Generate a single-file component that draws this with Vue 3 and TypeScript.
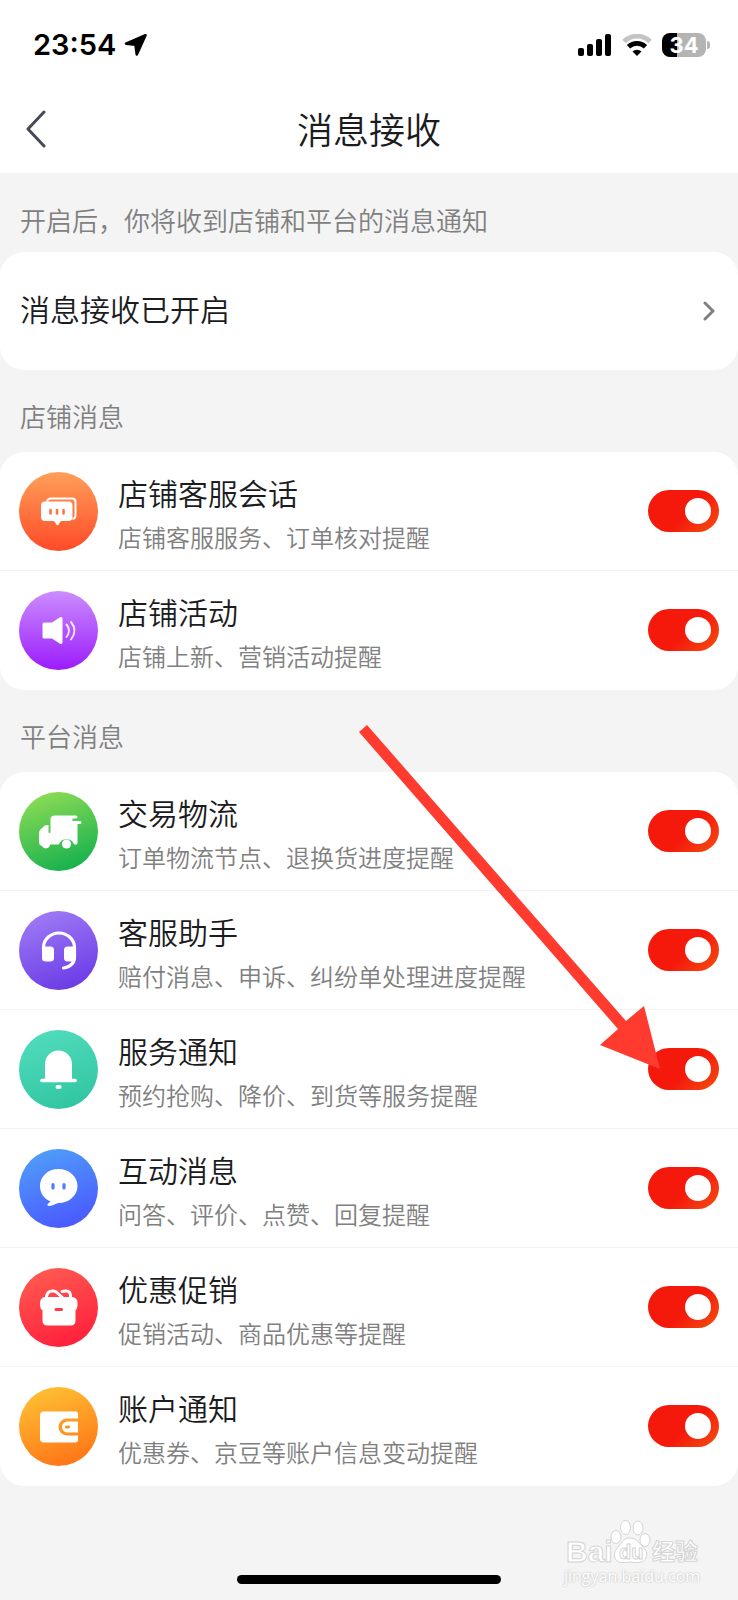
<script setup lang="ts">
import { reactive } from 'vue'

interface Item {
  id: string
  title: string
  desc: string
  from: string
  to: string
  on: boolean
}

interface Group {
  name: string
  items: Item[]
}

const groups = reactive<Group[]>([
  {
    name: '店铺消息',
    items: [
      { id: 'chat', title: '店铺客服会话', desc: '店铺客服服务、订单核对提醒', from: '#ff9f58', to: '#ff4a28', on: true },
      { id: 'sound', title: '店铺活动', desc: '店铺上新、营销活动提醒', from: '#cb8dff', to: '#9b1cfb', on: true },
    ],
  },
  {
    name: '平台消息',
    items: [
      { id: 'truck', title: '交易物流', desc: '订单物流节点、退换货进度提醒', from: '#8cdb55', to: '#14b14e', on: true },
      { id: 'headset', title: '客服助手', desc: '赔付消息、申诉、纠纷单处理进度提醒', from: '#9e7af5', to: '#6b3be6', on: true },
      { id: 'bell', title: '服务通知', desc: '预约抢购、降价、到货等服务提醒', from: '#50dcbc', to: '#32c5a2', on: true },
      { id: 'talk', title: '互动消息', desc: '问答、评价、点赞、回复提醒', from: '#4f9df9', to: '#4a58ff', on: true },
      { id: 'gift', title: '优惠促销', desc: '促销活动、商品优惠等提醒', from: '#ff5a50', to: '#ff1f3c', on: true },
      { id: 'wallet', title: '账户通知', desc: '优惠券、京豆等账户信息变动提醒', from: '#ffc033', to: '#ff7417', on: true },
    ],
  },
])

const isUpright = (id: string): boolean => id === 'chat' || id === 'sound'
</script>

<template>
  <div class="page">
    <header class="top">
      <div class="status">
        <span class="time">23:54</span>
        <svg class="locate" viewBox="0 0 24 24" aria-hidden="true">
          <path d="M21.500 2.200L2 10.600l9.500 1.200L12.800 21.500z" stroke="#000" stroke-width="2.600" stroke-linejoin="round" />
        </svg>
        <svg class="signal" viewBox="0 0 34 22" aria-hidden="true">
          <rect x="0" y="14" width="6" height="8" rx="2" />
          <rect x="9" y="10" width="6" height="12" rx="2" />
          <rect x="18" y="5" width="6" height="17" rx="2" />
          <rect x="27" y="0" width="6" height="22" rx="2" />
        </svg>
        <svg class="wifi" viewBox="0 0 30 22" aria-hidden="true">
          <path d="M2 7.500a18.500 18.500 0 0 1 26 0" fill="none" stroke="#c4c4c4" stroke-width="4.800" />
          <path d="M6.500 12.800a12.500 12.500 0 0 1 17 0" fill="none" stroke="#000" stroke-width="4.800" />
          <path d="M15 22l-4.500-4.600a6.800 6.800 0 0 1 9 0z" />
        </svg>
        <span class="battery"><b>34</b></span>
      </div>
      <nav class="bar">
        <button class="back" type="button" aria-label="返回">
          <svg viewBox="0 0 22 38" aria-hidden="true">
            <path d="M19 2L3 19l16 17" fill="none" stroke="#454a54" stroke-width="3" stroke-linecap="round" stroke-linejoin="round" />
          </svg>
        </button>
        <h1>消息接收</h1>
      </nav>
    </header>

    <main>
      <p class="hint">开启后，你将收到店铺和平台的消息通知</p>
      <a class="card master" href="#settings">
        <span>消息接收已开启</span>
        <svg viewBox="0 0 12 20" aria-hidden="true">
          <path d="M2 2l8 8-8 8" fill="none" stroke="#808080" stroke-width="3" stroke-linecap="round" stroke-linejoin="round" />
        </svg>
      </a>

      <section v-for="group in groups" :key="group.name">
        <h2>{{ group.name }}</h2>
        <ul class="card">
          <li v-for="item in group.items" :key="item.id">
            <label class="row" :for="item.id">
              <svg class="icon" viewBox="0 0 79 79" aria-hidden="true">
                <defs>
                  <linearGradient
                    :id="'fill-' + item.id"
                    :x1="isUpright(item.id) ? 0.5 : 0.3"
                    y1="0"
                    :x2="isUpright(item.id) ? 0.5 : 0.65"
                    y2="1"
                  >
                    <stop offset="0" :stop-color="item.from" />
                    <stop offset="1" :stop-color="item.to" />
                  </linearGradient>
                </defs>
                <circle cx="39.500" cy="39.500" r="39.500" :fill="`url(#fill-${item.id})`" />
                <g v-if="item.id === 'chat'">
                  <path d="M28 29.500q1-3 4-3h21q3.500 0 3.500 3.500v13q0 3.500-3 4" fill="none" stroke="#fff" stroke-width="2" />
                  <path d="M26 29.500h23.500q4 0 4 4V45q0 4-4 4H42l-2.600 3.800q-.9 1-1.800 0L35 49h-9q-4 0-4-4V33.500q0-4 4-4z" fill="#fff" />
                  <path d="M31.500 38v3.500M38 38v3.500M44.500 38v3.500" stroke="#ff7540" stroke-width="2.600" stroke-linecap="round" />
                </g>
                <g v-else-if="item.id === 'sound'">
                  <path d="M25 31.500h8l8-5.200q2.500-1 2.500 1.400v23.600q0 2.400-2.500 1.400L33 47.500h-8q-1.500 0-1.500-1.500V33q0-1.500 1.500-1.500z" fill="#fff" />
                  <path d="M47.500 33.500q5 6 0 12.500M52 31q7 8.500 0 17.500" fill="none" stroke="#fff" stroke-opacity="0.85" stroke-width="2" stroke-linecap="round" />
                </g>
                <g v-else-if="item.id === 'truck'">
                  <path d="M36 23.500h21q1.500 0 1.500 1.500t-1.500 1.500h-3.500V29H61q1.500 0 1.500 1.500T61 32h-2.500v19q0 1.500-1.500 1.500h-1.800a8.300 8.300 0 0 0-15.400 0H31a4.200 4.200 0 0 1-8 1.500q-3-.5-3-4V41q0-2 1.300-3.200l4-4Q26.500 33 28 33h1.500v7q0 1 1 1t1-1V27q0-3.500 4.500-3.500z" fill="#fff" />
                  <circle cx="47.500" cy="52" r="4.600" fill="#fff" />
                </g>
                <g v-else-if="item.id === 'headset'">
                  <path d="M24.500 39v-2.500a15.500 14.500 0 0 1 31 0V46q0 9-11 11" fill="none" stroke="#fff" stroke-width="3.200" stroke-linecap="round" />
                  <rect x="23" y="35.500" width="12" height="15" rx="3.500" fill="#fff" />
                  <rect x="45" y="35.500" width="12" height="15" rx="3.500" fill="#fff" />
                </g>
                <g v-else-if="item.id === 'bell'">
                  <path d="M26 49.500V34a13.500 13.500 0 0 1 27 0v15.500z" fill="#fff" />
                  <path d="M23 50.500h33" stroke="#fff" stroke-width="3.600" stroke-linecap="round" />
                  <rect x="36.500" y="55" width="6" height="4" rx="2" fill="#fff" />
                </g>
                <g v-else-if="item.id === 'talk'">
                  <path d="M39.500 20C50 20 58.500 27.500 58.500 37S50 54 39.500 54c-2 0-5.500 3-9.500 3-2 0-2-2-.5-2.800l2-1.800C25 50 21 44 21 37c0-9.500 8-17 18.500-17z" fill="#fff" />
                  <path d="M34 35.500v3.500M45 35.500v3.500" stroke="#4d7cfc" stroke-width="3.200" stroke-linecap="round" />
                </g>
                <g v-else-if="item.id === 'gift'">
                  <path d="M27.500 31q-.5-8.500 7-8 2.500.2 5.500 3.500l5 4.500M43 23.500q2-.5 4-.5 5.500 0 4.500 8" fill="none" stroke="#fff" stroke-width="3" stroke-linecap="round" />
                  <path d="M26 29h27q5.500 0 5.500 6.500T56.500 42v10.500q0 5-5 5h-23q-5 0-5-5V42Q21 41.500 21 35.500T26 29z" fill="#fff" />
                  <path d="M37 41.500h5.500" stroke="#ff3a48" stroke-width="3" stroke-linecap="round" />
                </g>
                <g v-else>
                  <path d="M25 24.500h31.500q2.500 0 2.500 2.500v4.500H48a8.500 8.500 0 0 0 0 17h11V53q0 2.500-2.500 2.500H25q-4 0-4-4v-23q0-4 4-4z" fill="#fff" />
                  <path d="M48.500 34.500H59v11H48.500a5.500 5.500 0 0 1 0-11z" fill="#fff" />
                  <rect x="46" y="38.500" width="5" height="3" rx="1.500" fill="#ff8f20" />
                </g>
              </svg>
              <span class="text">
                <span class="title">{{ item.title }}</span>
                <span class="desc">{{ item.desc }}</span>
              </span>
              <input :id="item.id" v-model="item.on" class="switch" type="checkbox" role="switch" />
            </label>
          </li>
        </ul>
      </section>
    </main>

    <footer>
      <span class="home"></span>
    </footer>

    <svg class="pointer" viewBox="0 0 310 350" aria-hidden="true">
      <path d="M12 3L271 299l18-15 16 63-60-24 18-16L4 10z" fill="#ff3b30" />
    </svg>

    <div class="mark">
      <svg viewBox="0 0 140 54" aria-hidden="true">
        <g class="brand">
          <text x="4" y="43" font-size="30">Bai</text>
          <text x="90" y="41" font-size="23">经验</text>
        </g>
        <g fill="#fff" stroke="#d4d4d4" stroke-width="1">
          <ellipse cx="54" cy="18" rx="5" ry="6.500" />
          <ellipse cx="63.500" cy="8.500" rx="5" ry="7" />
          <ellipse cx="76" cy="9" rx="5" ry="7" />
          <ellipse cx="83" cy="21" rx="5" ry="6.500" />
          <path d="M68 19c6 0 8 4 12 8s6 7 4 12-8 5-16 4c-8 1-13 1-15-4s1-8 4-12 5-8 11-8z" />
        </g>
        <g class="brand">
          <text x="57" y="40" font-size="20">du</text>
        </g>
      </svg>
      <span>jingyan.baidu.com</span>
    </div>
  </div>
</template>

<style>
body {
  margin: 0;
  background: #f4f4f4;
}
</style>

<style scoped>
.page {
  position: relative;
  display: flex;
  flex-direction: column;
  min-height: 100vh;
  background: #f4f4f4;
  color: #1c1c1e;
  font-family: "Noto Sans CJK SC", sans-serif;
  font-weight: 350;
}
.top {
  background: #fff;
}
.status {
  display: flex;
  align-items: center;
  height: 90px;
  padding: 0 32px 0 33px;
  color: #000;
}
.time {
  font: 600 29px/40px Inter, sans-serif;
}
.locate {
  width: 24px;
  height: 24px;
  margin: 0 auto 0 8px;
}
.signal {
  width: 34px;
  height: 22px;
  margin-right: 10px;
}
.wifi {
  width: 30px;
  height: 22px;
  margin-right: 10px;
}
.battery {
  position: relative;
  width: 44px;
  height: 24px;
  border-radius: 8px;
  background: linear-gradient(90deg, #000 34%, #b4b4b4 34%);
  color: #fff;
  font: 700 22px/24px Inter, sans-serif;
  text-align: center;
}
.battery b {
  font-weight: 700;
}
.battery::after {
  content: "";
  position: absolute;
  left: 45px;
  top: 8px;
  width: 3px;
  height: 8px;
  border-radius: 0 4px 4px 0;
  background: #b4b4b4;
}
.bar {
  display: grid;
  grid-template-columns: 80px 1fr 80px;
  align-items: start;
  height: 83px;
}
.back {
  display: flex;
  padding: 20px 0 0 25px;
  border: 0;
  background: none;
}
.back svg {
  width: 22px;
  height: 38px;
}
h1 {
  margin: 0;
  font-size: 36px;
  font-weight: inherit;
  line-height: 76px;
  text-align: center;
}
.hint,
h2 {
  margin: 0;
  padding: 0 20px;
  color: #808080;
  font-size: 26px;
  font-weight: inherit;
  line-height: 32px;
}
.hint {
  padding-top: 31px;
  padding-bottom: 16px;
}
h2 {
  padding-top: 30px;
  padding-bottom: 20px;
}
.card {
  margin: 0;
  padding: 0;
  border-radius: 24px;
  background: #fff;
  list-style: none;
}
.master {
  display: flex;
  align-items: center;
  justify-content: space-between;
  height: 118px;
  padding: 0 23px 0 20px;
  color: inherit;
  font-size: 30px;
  line-height: 44px;
  text-decoration: none;
}
.master span {
  padding-bottom: 6px;
}
.master svg {
  width: 12px;
  height: 20px;
}
li {
  border-bottom: 1px solid #f2f2f2;
}
li:last-child {
  border-color: transparent;
}
.row {
  display: flex;
  align-items: center;
  height: 118px;
  padding: 0 19px;
}
.icon {
  flex: none;
  width: 79px;
  height: 79px;
}
.text {
  display: flex;
  flex: 1;
  flex-direction: column;
  min-width: 0;
  margin-left: 20px;
  padding-bottom: 6px;
}
.title {
  font-size: 30px;
  line-height: 58px;
}
.desc {
  color: #808080;
  font-size: 24px;
  line-height: 32px;
}
.switch {
  flex: none;
  display: flex;
  align-items: center;
  appearance: none;
  width: 71px;
  height: 42px;
  margin: 0;
  padding: 0 8px;
  border-radius: 21px;
  background: #ddd;
}
.switch::before {
  content: "";
  width: 26px;
  height: 26px;
  border-radius: 50%;
  background: #fff;
}
.switch:checked {
  justify-content: flex-end;
  background: linear-gradient(135deg, #f5190c 55%, #f4500f);
}
footer {
  display: flex;
  justify-content: center;
  margin-top: auto;
  padding: 24px 0 16px;
}
.home {
  width: 264px;
  height: 9px;
  border-radius: 5px;
  background: #000;
}
.pointer {
  position: absolute;
  top: 722px;
  right: 73px;
  width: 310px;
  height: 350px;
  pointer-events: none;
}
.mark {
  position: absolute;
  right: 36px;
  bottom: 13px;
  width: 140px;
  pointer-events: none;
}
.mark svg {
  display: block;
  overflow: visible;
  margin-bottom: -8px;
}
.brand {
  fill: #fff;
  stroke: #d4d4d4;
  stroke-width: 1;
  font-family: "Liberation Sans", "Noto Sans CJK SC", sans-serif;
  font-weight: 700;
}
.mark span {
  display: block;
  color: #fff;
  font: 16px/22px "Open Sans", sans-serif;
  text-align: center;
  text-shadow: 0 0 2px #aaa;
}
</style>
